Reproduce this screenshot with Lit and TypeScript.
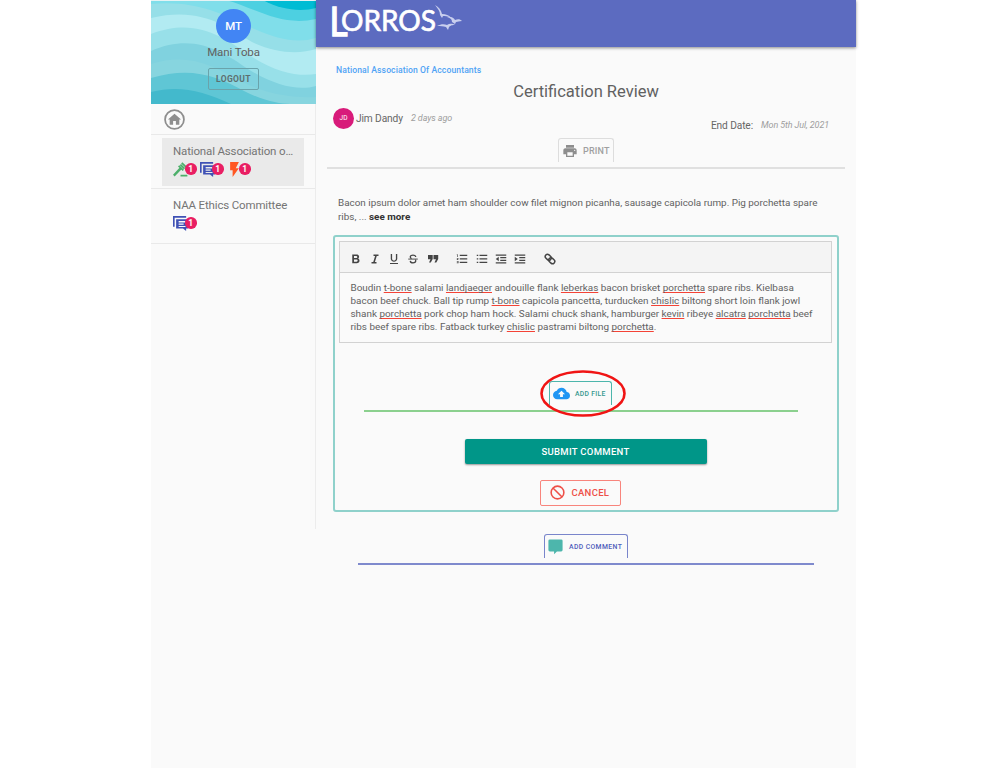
import { LitElement, html, css, svg } from "lit";
import { customElement, property } from "lit/decorators.js";

const shapes: Record<string, unknown> = {
  home: svg`<circle cx="12" cy="12" r="10.8" fill="none" stroke="currentColor" stroke-width="2"/><path d="M12 5.400 4.500 12h2v6h3.900v-4.200h3.200V18h3.900v-6h2z"/>`,
  gavel: svg`<path d="M12 20.500h11v2.700H12zM13 2.200 15 .2l7.500 7.500-2 2zM8 7l2-2 7.500 7.500-2 2zM10.800 5l2-2 6.600 6.600-2 2zM10.400 9l3 3L2.600 23 0 20.400z"/>`,
  chats: svg`<path d="M0 0h21v2.600H2.600V17H0z"/><path fill-rule="evenodd" d="M5 5H24V20h-3v4l-5-4H5zM9 8v2.300H20V8zm0 4v2h8v-2zm0 3.800V17.500H20v-1.700z"/>`,
  bolt: svg`<path d="M5 0v13h4v11l10-14h-5l5-10z"/>`,
  print: svg`<path d="M19 8H5c-1.660 0-3 1.340-3 3v6h4v4h12v-4h4v-6c0-1.660-1.340-3-3-3zm-3 11H8v-5h8v5zm3-7c-.550 0-1-.450-1-1s.450-1 1-1 1 .450 1 1-.450 1-1 1zm-1-9H6v4h12V3z"/>`,
  cloud: svg`<path d="M19.350 10.040C18.670 6.590 15.640 4 12 4 9.110 4 6.600 5.640 5.350 8.040 2.340 8.360 0 10.910 0 14c0 3.310 2.690 6 6 6h13c2.760 0 5-2.240 5-5 0-2.640-2.050-4.780-4.650-4.960zM14 13v4h-4v-4H7l5-5 5 5h-3z"/>`,
  block: svg`<g fill="none" stroke="currentColor" stroke-width="2.200"><circle cx="12" cy="12" r="9"/><path d="m5.600 5.600 12.800 12.800"/></g>`,
  comment: svg`<path d="M4 2h16a2 2 0 0 1 2 2v13a2 2 0 0 1-2 2h-6l-4 4v-4H4a2 2 0 0 1-2-2V4a2 2 0 0 1 2-2z"/>`,
  bold: svg`<path fill-rule="evenodd" d="M4.500 3h8.700c3.200 0 5 1.900 5 4.400 0 1.600-.8 3-2.200 3.700 1.900.6 3 2.200 3 4.300 0 3-2.100 5.100-5.500 5.100h-9zM8 6v3.800h4.600c1.200 0 2-.7 2-1.900S13.800 6 12.600 6zm0 6.800v4.700h5.100c1.400 0 2.200-.9 2.200-2.300s-.8-2.400-2.200-2.400z"/>`,
  italic: svg`<path d="M9 3v3h3.200L8.500 18H5v3h10v-3h-3.200l3.700-12H19V3z"/>`,
  underline: svg`<path d="M12 17.500c3.600 0 6.500-2.700 6.500-6V2h-2.700v9.300c0 2-1.700 3.600-3.800 3.600s-3.800-1.600-3.800-3.600V2H5.500v9.500c0 3.300 2.900 6 6.500 6zM4 20v2h16v-2H4z"/>`,
  strike: svg`<path d="M2.500 11.200h19v1.900h-19z"/><path d="M17.500 8C17.300 5.400 15 4 12 4S6.500 5.500 6.500 8c0 1.500.9 2.600 2.600 3.200M6.500 15.700c.2 2.600 2.500 4 5.500 4 3.300 0 5.500-1.500 5.500-4 0-1-.3-1.900-1-2.500" fill="none" stroke="currentColor" stroke-width="2.500"/>`,
  quote: svg`<path d="M4 19h3.600l3.800-7V4H2v8.500h5zM15 19h3.600l3.800-7V4H13v8.500h5z"/>`,
  ol: svg`<path d="M1.500 17h2.300v.500H2.700v1.100h1.100v.500H1.500v1.200H5V16H1.500zM2.700 8H4V3H1.500v1.200h1.200zM1.500 11h2L1.500 13.200v1H5V13H3.200L5 10.900V10H1.500zM7.500 3.500h15V6h-15zm0 14h15V20h-15zm0-7h15V13h-15z"/>`,
  ul: svg`<path d="M1.500 3.500h3V6h-3zm0 7h3V13h-3zm0 7h3V20h-3zM7 3.500h15.500V6H7zm0 7h15.500V13H7zm0 7h15.500V20H7z"/>`,
  outdent: svg`<path d="M1.500 3h21v2.700h-21zm0 15.500h21v2.700h-21zm9-10.300h12v2.500h-12zm0 5.200h12v2.500h-12zM1.500 12 7.500 7.500v9z"/>`,
  indent: svg`<path d="M1.500 3h21v2.700h-21zm0 15.500h21v2.700h-21zm9-10.300h12v2.500h-12zm0 5.200h12v2.500h-12zM7.500 12l-6-4.500v9z"/>`,
  link: svg`<g fill="none" stroke="currentColor" stroke-width="3"><rect x="2" y="4" width="13" height="9" rx="4.500" transform="rotate(42 8.500 8.500)"/><rect x="9" y="11" width="13" height="9" rx="4.500" transform="rotate(42 15.500 15.500)"/></g>`,
};

@customElement("ui-icon")
class UiIcon extends LitElement {
  @property() name = "";
  @property({ type: Number }) size = 12;
  static styles = css`
    :host { display: block; flex: none; line-height: 0; }
    svg { display: block; fill: currentColor; }
  `;
  render() {
    return html`<svg width=${this.size} height=${this.size} viewBox="0 0 24 24">${shapes[this.name]}</svg>`;
  }
}

@customElement("side-item")
class SideItem extends LitElement {
  @property() label = "";
  @property({ type: Array }) icons: string[] = [];
  @property({ type: Boolean, reflect: true }) selected = false;
  static styles = css`
    :host { display: block; height: 55px; box-sizing: border-box; border-bottom: 1px solid #e9e9e9; padding: 3px 11px 2px; }
    :host([selected]) { height: 54px; }
    .box { height: 48px; padding: 6px 9px 0 11px; box-sizing: border-box; }
    :host([selected]) .box { background: #eaeaea; }
    .name { font-size: 11.5px; line-height: 14px; color: #757575; white-space: nowrap; letter-spacing: -.15px; }
    .icons { display: flex; gap: 3.500px; margin-top: 3px; }
    .pair { display: flex; align-items: center; height: 16px; width: 23.500px; }
    .gavel { color: #4caf6a; }
    .chats { color: #3f51b5; }
    .bolt { color: #ff5722; }
    .count { width: 11.500px; height: 11.500px; border-radius: 50%; background: #e91e63; color: #fff; font: 700 8.500px/12px Roboto, sans-serif; text-align: center; margin-left: -3px; flex: none; }
  `;
  render() {
    return html`<div class="box">
      <div class="name">${this.label}</div>
      <div class="icons">
        ${this.icons.map((i) => html`<div class="pair"><ui-icon class=${i} name=${i} size="15"></ui-icon><span class="count">1</span></div>`)}
      </div>
    </div>`;
  }
}

@customElement("app-root")
class AppRoot extends LitElement {
  static styles = css`
    :host { display: block; height: 768px; overflow: hidden; background: #fff; font-family: Roboto, sans-serif; color: #666; }
    .app { display: flex; width: 705px; height: 768px; margin-left: 151px; background: #fafafa; }
    .side { width: 165px; height: 529px; box-sizing: border-box; border-right: 1px solid #ececec; flex: none; }
    .profile { display: grid; width: 165px; height: 104px; }
    .waves, .user { grid-area: 1 / 1; }
    .waves { display: block; }
    .user { display: flex; flex-direction: column; align-items: center; padding-top: 9px; }
    .mt { width: 35px; height: 34px; border-radius: 50%; background: #4285f4; color: #fff; font-size: 11.5px; font-weight: 500; line-height: 34px; text-align: center; letter-spacing: -.1px; }
    .uname { margin-top: 2px; font-size: 11.5px; line-height: 15px; letter-spacing: -.1px; color: #616161; }
    .logout { margin-top: 8px; width: 51px; height: 22px; box-sizing: border-box; border: 1px solid #6aa3ab; border-radius: 2px; font-size: 8.5px; font-weight: 700; letter-spacing: .35px; line-height: 20px; text-align: center; color: #5c6f70; }
    .home { height: 31px; box-sizing: border-box; border-bottom: 1px solid #e9e9e9; padding: 4.500px 0 0 13px; color: #8e8e8e; }
    .main { flex: 1; min-width: 0; }
    .bar { height: 47px; background: #5c6bc0; box-shadow: 0 1px 3px rgba(0,0,0,.45); }
    .bar svg { display: block; }
    .logo { font-family: Lato, sans-serif; fill: #fff; stroke: #fff; stroke-width: .7px; }
    .cap { stroke-width: 1.300px; }
    .org { padding: 17px 0 0 20px; font-size: 8.6px; font-weight: 500; line-height: 12px; color: #4fa3f5; letter-spacing: .1px; }
    .title { margin-top: 6px; text-align: center; font-size: 16.5px; line-height: 20px; color: #616161; }
    .meta { display: flex; justify-content: space-between; height: 34px; padding: 5px 27px 0 17px; }
    .author, .due { display: flex; align-items: center; height: 22px; }
    .due { margin-top: 7px; }
    .jd { width: 21px; height: 21px; border-radius: 50%; background: #d81b7a; color: #fff; font-size: 6.500px; line-height: 21px; text-align: center; margin-right: 2px; }
    .who { font-size: 10.2px; letter-spacing: -.12px; }
    .when { font-size: 9px; font-style: italic; color: #9e9e9e; margin-left: 8px; letter-spacing: -.1px; }
    .tab { display: flex; align-items: center; box-sizing: border-box; height: 23px; margin: 0 auto; border: 1px solid; border-bottom: 0; border-radius: 3px 3px 0 0; font-weight: 500; white-space: nowrap; }
    .print { width: 56px; margin-top: -3px; padding-left: 3px; height: 24px; border-color: #ddd; color: #a0a0a0; font-size: 9px; gap: 5px; letter-spacing: .2px; }
    .print ui-icon { color: #8e8e8e; }
    .rule { height: 2px; }
    .r1 { margin: 5px 11px 0; background: #e0e0e0; }
    .desc { padding: 27px 0 0 22px; font-size: 9.880px; line-height: 14px; white-space: nowrap; color: #616161; }
    .desc b { color: #333; }
    .card { margin: 11px 17px 0; height: 277px; box-sizing: border-box; border: 2px solid #8fd1cb; border-radius: 3px; padding: 4px 5px 0 4px; }
    .tools { display: flex; align-items: center; height: 32px; box-sizing: border-box; border: 1px solid #d2d2d2; background: #f4f4f4; padding: 3px 0 0 9.500px; gap: 7.300px; color: #444; }
    .gap { width: 3px; }
    .editor { height: 70px; box-sizing: border-box; border: 1px solid #d2d2d2; padding: 8px 0 0 10.500px; border-top: 0; font-size: 9.910px; line-height: 13.100px; white-space: nowrap; color: #616161; }
    .editor u { text-decoration: underline #f44336 1px; text-underline-offset: 1px; text-decoration-skip-ink: none; }
    .file { position: relative; width: 63px; margin: 38px 0 0 210px; height: 24px; padding-left: 3px; gap: 5px; border-color: #4db6ac; color: #35988f; font-size: 6.800px; letter-spacing: .3px; }
    .file ui-icon { color: #2196f3; }
    .ring { position: absolute; left: -11.500px; top: -14px; display: block; }
    .r2 { margin: 5px 34px 0 25px; background: #8bd08e; }
    .submit { width: 242px; height: 25px; margin: 27px auto 0; border-radius: 2px; background: #009688; color: #fff; box-shadow: 0 1px 2px rgba(0,0,0,.4); font-size: 9.500px; font-weight: 500; line-height: 25px; text-align: center; letter-spacing: .3px; }
    .cancel { display: flex; align-items: center; gap: 6px; box-sizing: border-box; width: 81px; height: 26px; margin: 16px 0 0 201px; padding: 0 0 1px 7.500px; border: 1px solid #f8847c; border-radius: 2px; color: #ee5048; font-size: 9.500px; font-weight: 500; letter-spacing: .3px; }
    .add { width: 84px; margin-top: 22px; height: 24px; padding-left: 2px; gap: 5px; border-color: #7985cb; color: #4f5dba; font-size: 6.800px; letter-spacing: .4px; }
    .add ui-icon { color: #4db6ac; }
    .r3 { margin: 5px 42px 0; background: #7f8acd; }
  `;
  render() {
    const tools = ["bold", "italic", "underline", "strike", "quote", "", "ol", "ul", "outdent", "indent", "", "link"];
    return html`<div class="app">
      <aside class="side">
        <div class="profile">
          <svg class="waves" width="165" height="104" viewBox="0 0 165 104">
            <rect width="165" height="104" fill="#80deea"/>
            <path d="M75 0C104 8 130 27 165 19V0z" fill="#4dd0e1"/>
            <path d="M112 0C130 10 150 12 165 8V0z" fill="#00bcd4"/>
            <path d="M0 4C42 0 70 13 97 26 124 39 145 44 165 38V104H0z" fill="#96dfe8"/>
            <path d="M0 18C50 6 76 27 101 42 126 54 149 54 165 49V104H0z" fill="#b2ebf2"/>
            <path d="M0 34C45 17 72 37 98 55 124 72 147 77 165 74V104H0z" fill="#98e0e9"/>
            <path d="M0 51C43 32 72 52 97 69 124 86 147 91 165 86V104H0z" fill="#80d2df"/>
            <path d="M0 64C38 52 62 66 92 82 119 96 146 98 165 97V104H0z" fill="#87d5df"/>
            <path d="M0 78C40 66 66 76 93 91 113 101 129 104 139 104H0z" fill="#5fc6d5"/>
            <path d="M0 92C28 85 52 91 80 104H0z" fill="#43b9cc"/>
            <path d="M0 .500H165" stroke="#e6f3f4"/>
          </svg>
          <div class="user"><div class="mt">MT</div><div class="uname">Mani Toba</div><div class="logout">LOGOUT</div></div>
        </div>
        <div class="home"><ui-icon name="home" size="21"></ui-icon></div>
        <side-item selected label="National Association o…" .icons=${["gavel", "chats", "bolt"]}></side-item>
        <side-item label="NAA Ethics Committee" .icons=${["chats"]}></side-item>
      </aside>
      <main class="main">
        <div class="bar">
          <svg width="160" height="47" viewBox="0 0 160 47">
            <text class="logo" x="13.500" y="35.500" font-size="40"><tspan class="cap" textLength="18" lengthAdjust="spacingAndGlyphs">L</tspan><tspan x="25" y="30.500" font-size="29" textLength="95" lengthAdjust="spacingAndGlyphs">ORROS</tspan></text>
            <g fill="#c9cfee"><path d="M119 5c4 2 6 5 7 9 4 0 7 1 9 4-4-2-6-2-8-2l-1 2-2-3c0-4-2-6-5-10z"/><path d="M131 17c4-1 7 1 8 3 3-1 5-1 7 1-3 0-4 1-6 1l-1 2-3-2c0-3-2-4-5-5z"/><path d="M121 26c4-2 7-2 10-1 3-2 6-1 8 0-4 0-5 1-6 2l-1 3-2-3c-3-1-5-1-9-1z"/></g>
          </svg>
        </div>
        <div class="org">National Association Of Accountants</div>
        <div class="title">Certification Review</div>
        <div class="meta">
          <div class="author"><span class="jd">JD</span><span class="who">Jim Dandy</span><span class="when">2 days ago</span></div>
          <div class="due"><span class="who">End Date:</span><span class="when">Mon 5th Jul, 2021</span></div>
        </div>
        <div class="tab print"><ui-icon name="print" size="16"></ui-icon>PRINT</div>
        <div class="rule r1"></div>
        <div class="desc">Bacon ipsum dolor amet ham shoulder cow filet mignon picanha, sausage capicola rump. Pig porchetta spare<br>ribs, ... <b>see more</b></div>
        <section class="card">
          <div class="tools">${tools.map((t) => (t ? html`<ui-icon name=${t} size="12"></ui-icon>` : html`<span class="gap"></span>`))}</div>
          <div class="editor">Boudin <u>t-bone</u> salami <u>landjaeger</u> andouille flank <u>leberkas</u> bacon brisket <u>porchetta</u> spare ribs. Kielbasa<br>bacon beef chuck. Ball tip rump <u>t-bone</u> capicola pancetta, turducken <u>chislic</u> biltong short loin flank jowl<br>shank <u>porchetta</u> pork chop ham hock. Salami chuck shank, hamburger <u>kevin</u> ribeye <u>alcatra</u> <u>porchetta</u> beef<br>ribs beef spare ribs. Fatback turkey <u>chislic</u> pastrami biltong <u>porchetta</u>.</div>
          <div class="tab file"><ui-icon name="cloud" size="17"></ui-icon>ADD FILE
            <svg class="ring" width="88" height="50"><ellipse cx="44" cy="25.500" rx="41.500" ry="22" fill="none" stroke="#f01414" stroke-width="2.600"/></svg>
          </div>
          <div class="rule r2"></div>
          <div class="submit">SUBMIT COMMENT</div>
          <div class="cancel"><ui-icon name="block" size="17"></ui-icon>CANCEL</div>
        </section>
        <div class="tab add"><ui-icon name="comment" size="17"></ui-icon>ADD COMMENT</div>
        <div class="rule r3"></div>
      </main>
    </div>`;
  }
}
